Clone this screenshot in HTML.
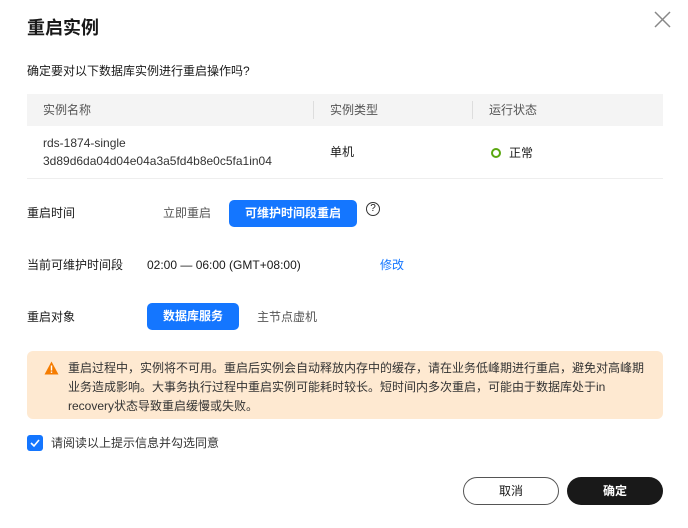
<!DOCTYPE html>
<html><head><meta charset="utf-8"><style>
*{margin:0;padding:0;box-sizing:border-box}
body{width:688px;height:528px;background:#fff;font-family:"Liberation Sans","Noto Sans CJK SC",sans-serif;color:#191919;position:relative;overflow:hidden;font-size:12px}
.a{position:absolute;white-space:nowrap}
</style></head><body>
<div class="a" style="left:27px;top:16px;font-size:18px;font-weight:bold;line-height:24px">重启实例</div>
<svg class="a" style="left:654px;top:11px" width="17" height="17" viewBox="0 0 17 17"><path d="M1 1L16 16M16 1L1 16" stroke="#888" stroke-width="1.5"/></svg>
<div class="a" style="left:27px;top:63px;line-height:16px">确定要对以下数据库实例进行重启操作吗?</div>
<div class="a" style="left:27px;top:94px;width:636px;height:32px;background:#f4f4f4"></div>
<div class="a" style="left:313px;top:101px;width:1px;height:18px;background:#ddd"></div>
<div class="a" style="left:472px;top:101px;width:1px;height:18px;background:#ddd"></div>
<div class="a" style="left:43px;top:102px;color:#555;line-height:16px">实例名称</div>
<div class="a" style="left:330px;top:102px;color:#555;line-height:16px">实例类型</div>
<div class="a" style="left:489px;top:102px;color:#555;line-height:16px">运行状态</div>
<div class="a" style="left:43px;top:134px;line-height:18px;color:#333">rds-1874-single<br>3d89d6da04d04e04a3a5fd4b8e0c5fa1in04</div>
<div class="a" style="left:330px;top:144px;line-height:16px">单机</div>
<div class="a" style="left:491px;top:148px;width:10px;height:10px;border:2.5px solid #5aa70f;border-radius:50%"></div>
<div class="a" style="left:509px;top:145px;line-height:16px">正常</div>
<div class="a" style="left:27px;top:178px;width:636px;height:1px;background:#eee"></div>
<div class="a" style="left:27px;top:205px;line-height:16px">重启时间</div>
<div class="a" style="left:163px;top:205px;line-height:16px;color:#555">立即重启</div>
<div class="a" style="left:229px;top:200px;width:128px;height:27px;background:#1476ff;border-radius:5px;color:#fff;font-weight:bold;text-align:center;line-height:27px">可维护时间段重启</div>
<div class="a" style="left:366px;top:202px;width:14px;height:14px;border:1px solid #333;border-radius:50%;font-size:10px;line-height:12px;text-align:center">?</div>
<div class="a" style="left:27px;top:257px;line-height:16px">当前可维护时间段</div>
<div class="a" style="left:147px;top:257px;line-height:16px">02:00 — 06:00 (GMT+08:00)</div>
<div class="a" style="left:380px;top:257px;line-height:16px;color:#1476ff">修改</div>
<div class="a" style="left:27px;top:309px;line-height:16px">重启对象</div>
<div class="a" style="left:147px;top:303px;width:92px;height:27px;background:#1476ff;border-radius:5px;color:#fff;font-weight:bold;text-align:center;line-height:27px">数据库服务</div>
<div class="a" style="left:257px;top:309px;line-height:16px;color:#555">主节点虚机</div>
<div class="a" style="left:27px;top:351px;width:636px;height:68px;background:#fee9d1;border-radius:6px"></div>
<svg class="a" style="left:44px;top:361px" width="15" height="14" viewBox="0 0 15 14"><path d="M7.5 0.5L14.5 13.5H0.5Z" fill="#f57c00"/><rect x="6.8" y="4.5" width="1.4" height="5" fill="#fff"/><rect x="6.8" y="10.5" width="1.4" height="1.4" fill="#fff"/></svg>
<div class="a" style="left:68px;top:359px;line-height:19px;white-space:normal;width:582px;color:#333">重启过程中，实例将不可用。重启后实例会自动释放内存中的缓存，请在业务低峰期进行重启，避免对高峰期业务造成影响。大事务执行过程中重启实例可能耗时较长。短时间内多次重启，可能由于数据库处于in recovery状态导致重启缓慢或失败。</div>
<div class="a" style="left:27px;top:435px;width:16px;height:16px;background:#1476ff;border-radius:3px"></div>
<svg class="a" style="left:29px;top:437px" width="12" height="12" viewBox="0 0 12 12"><path d="M2 6L5 9L10 3" stroke="#fff" stroke-width="1.6" fill="none"/></svg>
<div class="a" style="left:51px;top:435px;line-height:16px;color:#333">请阅读以上提示信息并勾选同意</div>
<div class="a" style="left:463px;top:477px;width:96px;height:28px;border:1px solid #555;border-radius:14px;text-align:center;line-height:26px">取消</div>
<div class="a" style="left:567px;top:477px;width:96px;height:28px;background:#191919;border-radius:14px;text-align:center;line-height:28px;color:#fff;font-weight:bold">确定</div>
</body></html>
